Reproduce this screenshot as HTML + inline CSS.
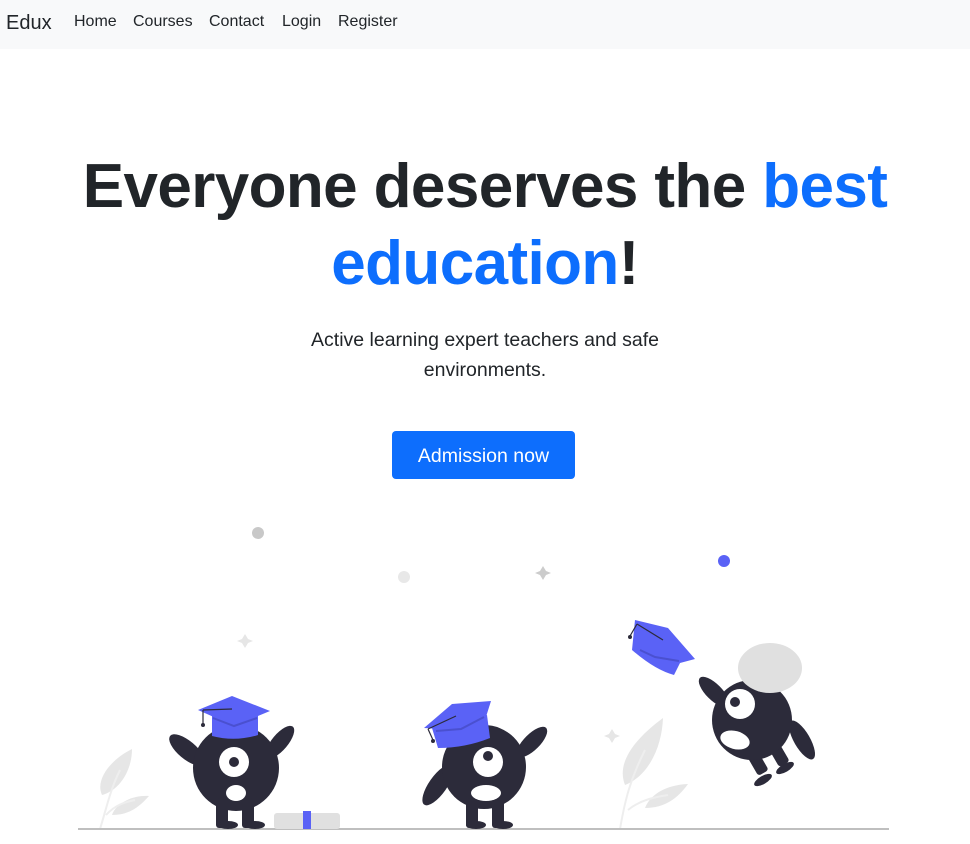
<!DOCTYPE html>
<html><head><meta charset="utf-8"><style>
*{margin:0;padding:0;box-sizing:border-box}
body{width:970px;height:844px;overflow:hidden;background:#fff;font-family:"Liberation Sans",sans-serif;color:#212529;position:relative}
nav{position:absolute;left:0;top:0;width:970px;height:49px;background:#f8f9fa}
.brand{position:absolute;left:6px;top:12px;font-size:20px;color:#212529}
.lk{position:absolute;top:13px;font-size:16px;color:#212529}
h1{position:absolute;left:0;width:970px;top:148px;text-align:center;font-size:62px;font-weight:bold;line-height:77px;letter-spacing:-0.6px;color:#212529}
h1 span{color:#0d6efd}
p{position:absolute;left:0;width:970px;top:325px;text-align:center;font-size:19.5px;line-height:30px;color:#212529}
.btn{position:absolute;left:392px;top:431px;width:183px;height:48px;background:#0d6efd;border-radius:4px;color:#fff;font-size:19.5px;text-align:center;line-height:50px}
svg{position:absolute;left:0;top:0}
</style></head><body>
<nav><div class="brand">Edux</div>
<div class="lk" style="left:74px">Home</div>
<div class="lk" style="left:133px">Courses</div>
<div class="lk" style="left:209px">Contact</div>
<div class="lk" style="left:282px">Login</div>
<div class="lk" style="left:338px">Register</div></nav>
<h1>Everyone deserves the <span>best</span><br><span>education</span>!</h1>
<p>Active learning expert teachers and safe<br>environments.</p>
<div class="btn">Admission now</div>
<svg width="970" height="844" viewBox="0 0 970 844">
<circle cx="258" cy="533" r="6" fill="#c8c8c8"/>
<circle cx="404" cy="577" r="6" fill="#e8e8e8"/>
<circle cx="724" cy="561" r="6" fill="#5a62f6"/>
<path d="M543 566 L546 571 L551 573 L546 575 L543 580 L540 575 L535 573 L540 571Z" fill="#ccc"/>
<path d="M245 634 L248 639 L253 641 L248 643 L245 648 L242 643 L237 641 L242 639Z" fill="#e6e6e6"/>
<path d="M612 729 L615 734 L620 736 L615 738 L612 743 L609 738 L604 736 L609 734Z" fill="#e6e6e6"/>
<g fill="#e6e6e6">
<path d="M132 749 C110 760 95 780 102 795 C120 790 132 770 132 749Z"/>
<path d="M149 796 C130 795 115 805 112 815 C130 815 140 806 149 796Z"/>
<path d="M663 718 C640 735 615 760 625 785 C650 775 662 745 663 718Z"/>
<path d="M688 784 C665 785 650 795 645 808 C665 808 678 798 688 784Z"/>
</g>
<path d="M100 829 C106 810 110 790 120 770 M106 815 C115 805 125 802 135 800" stroke="#eee" stroke-width="2" fill="none"/>
<path d="M620 829 C625 800 630 780 645 750 M628 810 C640 800 655 797 668 795" stroke="#eee" stroke-width="2" fill="none"/>
<rect x="78" y="828" width="811" height="2" fill="#bfbfbf"/>
<rect x="274" y="813" width="66" height="16" rx="3" fill="#e0e0e0"/>
<rect x="303" y="811" width="8" height="18" fill="#5a62f6"/>
<g fill="#2c2b3a">
<ellipse cx="187" cy="750" rx="22" ry="9" transform="rotate(40 187 750)"/>
<ellipse cx="280" cy="742" rx="20" ry="8" transform="rotate(-50 280 742)"/>
<circle cx="236" cy="768" r="43"/>
<rect x="216" y="798" width="12" height="30" rx="3"/><rect x="242" y="798" width="12" height="30" rx="3"/>
<ellipse cx="228" cy="825" rx="10" ry="4"/><ellipse cx="255" cy="825" rx="10" ry="4"/>
</g>
<circle cx="234" cy="762" r="15" fill="#fff"/><circle cx="234" cy="762" r="5" fill="#2c2b3a"/>
<ellipse cx="236" cy="793" rx="10" ry="8" fill="#fff"/>
<path d="M212 712 L258 712 L258 735 Q235 742 212 736Z" fill="#5a62f6"/>
<path d="M198 710 L232 696 L270 711 L234 726Z" fill="#5a62f6"/>
<path d="M213 718 L234 726 L257 718" stroke="#4a50d0" stroke-width="2" fill="none"/>
<path d="M203 710 L232 709 M203 710 L203 724" stroke="#2c2b3a" stroke-width="1.2" fill="none"/><circle cx="203" cy="725" r="2" fill="#2c2b3a"/>
<g fill="#2c2b3a">
<ellipse cx="438" cy="785" rx="9" ry="24" transform="rotate(35 438 785)"/>
<ellipse cx="532" cy="742" rx="8" ry="20" transform="rotate(45 532 742)"/>
<circle cx="484" cy="767" r="42"/>
<rect x="466" y="798" width="12" height="30" rx="3"/><rect x="492" y="798" width="12" height="30" rx="3"/>
<ellipse cx="476" cy="825" rx="10" ry="4"/><ellipse cx="503" cy="825" rx="10" ry="4"/>
</g>
<circle cx="488" cy="762" r="15" fill="#fff"/><circle cx="488" cy="756" r="5" fill="#2c2b3a"/>
<ellipse cx="486" cy="793" rx="15" ry="8" fill="#fff"/>
<path d="M432 728 L487 715 L490 738 Q465 748 438 748Z" fill="#5a62f6"/>
<path d="M424 728 L452 704 L491 701 L485 720 L461 730Z" fill="#5a62f6"/>
<path d="M436 731 L461 729 L484 717" stroke="#4a50d0" stroke-width="2" fill="none"/>
<path d="M428 729 L456 716 M428 729 L433 740" stroke="#2c2b3a" stroke-width="1.2" fill="none"/><circle cx="433" cy="741" r="2" fill="#2c2b3a"/>
<g fill="#2c2b3a">
<ellipse cx="714" cy="692" rx="8" ry="20" transform="rotate(-45 714 692)"/>
<ellipse cx="802" cy="740" rx="8" ry="22" transform="rotate(-30 802 740)"/>
<rect x="750" y="745" width="12" height="30" rx="3" transform="rotate(-30 756 760)"/>
<rect x="772" y="740" width="12" height="26" rx="3" transform="rotate(-30 778 753)"/>
<ellipse cx="763" cy="780" rx="10" ry="4" transform="rotate(-30 763 780)"/>
<ellipse cx="785" cy="768" rx="10" ry="4" transform="rotate(-30 785 768)"/>
<circle cx="752" cy="720" r="40"/>
</g>
<ellipse cx="770" cy="668" rx="32" ry="25" fill="#e0e0e0"/>
<circle cx="740" cy="704" r="15" fill="#fff"/><circle cx="735" cy="702" r="5" fill="#2c2b3a"/>
<ellipse cx="735" cy="740" rx="15" ry="9" fill="#fff" transform="rotate(15 735 740)"/>
<path d="M635 620 L668 628 L695 659 L680 663 L674 675 Q655 670 632 650Z" fill="#5a62f6"/>
<path d="M640 650 L655 657 L679 661" stroke="#4a50d0" stroke-width="2" fill="none"/>
<path d="M637 624 L663 640 M637 624 L630 636" stroke="#2c2b3a" stroke-width="1.2" fill="none"/><circle cx="630" cy="637" r="2" fill="#2c2b3a"/>
</svg>
</body></html>
